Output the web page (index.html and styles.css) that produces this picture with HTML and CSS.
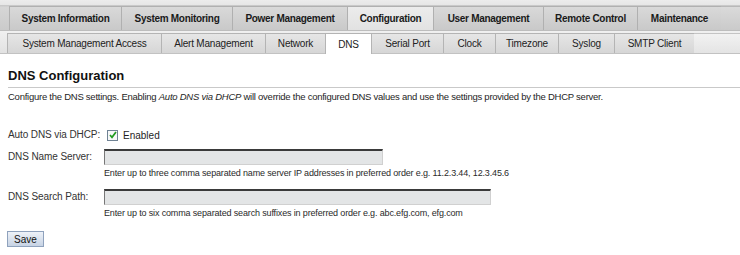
FILE: index.html
```html
<!DOCTYPE html>
<html>
<head>
<meta charset="utf-8">
<link rel="stylesheet" href="styles.css">
</head>
<body>
<div class="tabs-top">
  <div class="tab">System Information</div>
  <div class="tab">System Monitoring</div>
  <div class="tab">Power Management</div>
  <div class="tab sel">Configuration</div>
  <div class="tab">User Management</div>
  <div class="tab">Remote Control</div>
  <div class="tab">Maintenance</div>
  <div class="tab-fill"></div>
</div>
<div class="tabs-sub">
  <div class="stab">System Management Access</div>
  <div class="stab">Alert Management</div>
  <div class="stab">Network</div>
  <div class="stab sel">DNS</div>
  <div class="stab">Serial Port</div>
  <div class="stab">Clock</div>
  <div class="stab">Timezone</div>
  <div class="stab">Syslog</div>
  <div class="stab">SMTP Client</div>
  <div class="stab-fill"></div>
</div>
<div class="content">
  <h1 class="title">DNS Configuration</h1>
  <p class="desc">Configure the DNS settings. Enabling <i>Auto DNS via DHCP</i> will override the configured DNS values and use the settings provided by the DHCP server.</p>
  <div class="form">
    <div class="row row-check">
      <div class="label">Auto DNS via DHCP:</div>
      <div class="check-field">
        <span class="checkbox"><svg width="8" height="8" viewBox="0 0 8 8"><path d="M1 4 L3 6.3 L7 1" fill="none" stroke="#1f9a1f" stroke-width="1.7"/></svg></span>
        <span class="enabled">Enabled</span>
      </div>
    </div>
    <div class="row row-ns">
      <div class="label">DNS Name Server:</div>
      <div class="field">
        <div class="input w1"></div>
        <div class="hint">Enter up to three comma separated name server IP addresses in preferred order e.g. 11.2.3.44, 12.3.45.6</div>
      </div>
    </div>
    <div class="row row-sp">
      <div class="label">DNS Search Path:</div>
      <div class="field">
        <div class="input w2"></div>
        <div class="hint">Enter up to six comma separated search suffixes in preferred order e.g. abc.efg.com, efg.com</div>
      </div>
    </div>
  </div>
  <div class="btn">Save</div>
</div>
</body>
</html>
```
FILE: styles.css
```css
html, body { margin: 0; padding: 0; background: #fff; }
body { font-family: "Liberation Sans", Arial, sans-serif; font-size: 10px; color: #222; width: 740px; height: 255px; overflow: hidden; }

.tabs-top {
  display: flex;
  height: 31px;
  padding: 6px 0 0 9px;
  box-sizing: border-box;
  background: linear-gradient(#ececec 0, #e6e6e6 5px, #c9c9c9 5px, #c9c9c9 6px, #d6d6d6 7px, #cbcbcb 30px, #bdbdbd 30px);
}
.tab {
  flex: none;
  height: 24px;
  box-sizing: border-box;
  display: flex;
  align-items: center;
  justify-content: center;
  font-weight: bold;
  font-size: 10px;
  letter-spacing: -0.3px;
  color: #1a1a1a;
  background: linear-gradient(#d9d9d9, #c9c9c9);
  border: 1px solid #b0b0b0;
  border-bottom: none;
  margin-right: -1px;
}
.tab:nth-child(1) { width: 113px; }
.tab:nth-child(2) { width: 112px; }
.tab:nth-child(3) { width: 116px; }
.tab:nth-child(4) { width: 87px; }
.tab:nth-child(5) { width: 111px; }
.tab:nth-child(6) { width: 95px; }
.tab:nth-child(7) { width: 85px; }
.tab.sel { background: linear-gradient(#ececec, #e2e2e2); }
.tab-fill { flex: 1; height: 24px; background: linear-gradient(#dadada, #cacaca); border-top: 1px solid #b8b8b8; box-sizing: border-box; }

.tabs-sub {
  display: flex;
  height: 23px;
  box-sizing: border-box;
  padding: 2px 0 0 7px;
  background: linear-gradient(#f0f0f0, #e2e2e2);
  border-bottom: 1px solid #c2c2c2;
}
.stab {
  flex: none;
  height: 20px;
  box-sizing: border-box;
  display: flex;
  align-items: center;
  justify-content: center;
  font-size: 10px;
  letter-spacing: -0.2px;
  color: #222;
  background: linear-gradient(#e6e6e6, #d6d6d6);
  border: 1px solid #b4b4b4;
  border-bottom: none;
  margin-right: -1px;
}
.stab:nth-child(1) { width: 155px; }
.stab:nth-child(2) { width: 105px; }
.stab:nth-child(3) { width: 61px; }
.stab:nth-child(4) { width: 47px; }
.stab:nth-child(5) { width: 73px; }
.stab:nth-child(6) { width: 53px; }
.stab:nth-child(7) { width: 64px; }
.stab:nth-child(8) { width: 57px; }
.stab:nth-child(9) { width: 81px; }
.stab.sel { background: #fff; height: 21px; margin-bottom: -1px; }
.stab-fill { flex: 1; height: 20px; background: linear-gradient(#f2f2f2, #e4e4e4); border-top: 1px solid #c4c4c4; box-sizing: border-box; }

.content { padding: 0 0 0 8px; }
.title {
  margin: 14px 0 0;
  font-size: 13px;
  line-height: 16px;
  font-weight: bold;
  color: #111;
  padding-bottom: 3px;
  border-bottom: 1px solid #c9c9c9;
}
.desc { margin: 3px 0 0; font-size: 9.5px; line-height: 12px; letter-spacing: -0.25px; color: #1e1e1e; }

.form { margin-top: 25px; display: flex; flex-direction: column; }
.row { display: flex; }
.label { width: 96px; flex: none; color: #333; font-size: 10px; letter-spacing: -0.1px; line-height: 16px; }
.row-check .label { line-height: 14px; }
.row-ns { margin-top: 7px; }
.row-sp { margin-top: 10px; }
.field { display: flex; flex-direction: column; }
.check-field { display: flex; align-items: center; height: 14px; padding-left: 3px; gap: 5px; }
.checkbox {
  width: 11px; height: 11px; box-sizing: border-box; border: 1px solid #6f8294; background: #f6f7f8;
  display: flex; align-items: center; justify-content: center;
}
.enabled { font-size: 10px; color: #1e1e1e; }
.input {
  height: 16px; box-sizing: border-box;
  background: #e3e5e6;
  border: 1px solid #d0d0d0;
  border-top: 2px solid #3a3a3a;
  border-left: 1px solid #777;
}
.w1 { width: 279px; }
.w2 { width: 387px; }
.hint { font-size: 9px; line-height: 12px; letter-spacing: -0.15px; color: #2a2a2a; margin-top: 2px; }

.btn {
  display: inline-flex;
  align-items: center;
  justify-content: center;
  width: 37px;
  height: 16px;
  box-sizing: border-box;
  margin: 12px 0 0 -1px;
  font-size: 10px;
  color: #111;
  background: linear-gradient(#eef2f8, #c7d3e4);
  border: 1px solid #8fa2bd;
}
```
